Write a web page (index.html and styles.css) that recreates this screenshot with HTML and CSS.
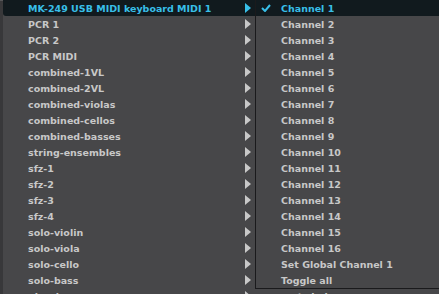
FILE: index.html
```html
<!DOCTYPE html>
<html lang="en">

<head>
    <meta charset="UTF-8">
    <title>MIDI input menu</title>
    <link rel="stylesheet" href="styles.css">
</head>

<body>
    <div class="desktop">
        <div class="behind"></div>

        <div class="menu">
            <ul class="menu-col">
                <li class="item active"><span>MK-249 USB MIDI keyboard MIDI 1</span><i class="arrow"></i></li>
                <li class="item"><span>PCR 1</span><i class="arrow"></i></li>
                <li class="item"><span>PCR 2</span><i class="arrow"></i></li>
                <li class="item"><span>PCR MIDI</span><i class="arrow"></i></li>
                <li class="item"><span>combined-1VL</span><i class="arrow"></i></li>
                <li class="item"><span>combined-2VL</span><i class="arrow"></i></li>
                <li class="item"><span>combined-violas</span><i class="arrow"></i></li>
                <li class="item"><span>combined-cellos</span><i class="arrow"></i></li>
                <li class="item"><span>combined-basses</span><i class="arrow"></i></li>
                <li class="item"><span>string-ensembles</span><i class="arrow"></i></li>
                <li class="item"><span>sfz-1</span><i class="arrow"></i></li>
                <li class="item"><span>sfz-2</span><i class="arrow"></i></li>
                <li class="item"><span>sfz-3</span><i class="arrow"></i></li>
                <li class="item"><span>sfz-4</span><i class="arrow"></i></li>
                <li class="item"><span>solo-violin</span><i class="arrow"></i></li>
                <li class="item"><span>solo-viola</span><i class="arrow"></i></li>
                <li class="item"><span>solo-cello</span><i class="arrow"></i></li>
                <li class="item"><span>solo-bass</span><i class="arrow"></i></li>
                <li class="item"><span>piccolo</span><i class="arrow"></i></li>
            </ul>
            <ul class="menu-col second">
                <li class="item"><span>sort shakers</span></li>
            </ul>
        </div>

        <div class="submenu">
            <ul>
                <li class="item active"><svg class="check" width="10" height="8" viewBox="0 0 10 8"><polyline points="1,4 4,7 9,1" fill="none" stroke="#38bfe8" stroke-width="2"/></svg><span>Channel 1</span></li>
                <li class="item"><span>Channel 2</span></li>
                <li class="item"><span>Channel 3</span></li>
                <li class="item"><span>Channel 4</span></li>
                <li class="item"><span>Channel 5</span></li>
                <li class="item"><span>Channel 6</span></li>
                <li class="item"><span>Channel 7</span></li>
                <li class="item"><span>Channel 8</span></li>
                <li class="item"><span>Channel 9</span></li>
                <li class="item"><span>Channel 10</span></li>
                <li class="item"><span>Channel 11</span></li>
                <li class="item"><span>Channel 12</span></li>
                <li class="item"><span>Channel 13</span></li>
                <li class="item"><span>Channel 14</span></li>
                <li class="item"><span>Channel 15</span></li>
                <li class="item"><span>Channel 16</span></li>
                <li class="item"><span>Set Global Channel 1</span></li>
                <li class="item"><span>Toggle all</span></li>
            </ul>
        </div>
    </div>
</body>

</html>
```

FILE: styles.css
```css
body {
    margin: 0;
    background-color: #474749;
    font-family: "DejaVu Sans", sans-serif;
    font-size: 9.5px;
    font-weight: bold;
    color: #c8c8c8;
    overflow: hidden;
}

.desktop {
    position: relative;
    display: flex;
    height: 294px;
    overflow: hidden;
}

.behind {
    width: 3px;
    flex-shrink: 0;
    background-color: #38383a;
    border-top: 1px solid #565658;
}

.menu {
    display: flex;
    background-color: #474749;
}

.menu-col {
    list-style: none;
    margin: 0;
    padding: 0;
    width: 252px;
}

.menu-col.second {
    width: 184px;
    padding-top: 288px;
}

ul {
    list-style: none;
    margin: 0;
    padding: 0;
}

.item {
    position: relative;
    display: flex;
    align-items: center;
    height: 16px;
    padding-left: 25px;
    white-space: nowrap;
}

.menu-col.second .item {
    padding-left: 26px;
}

.item.active {
    background-color: #111a1e;
    color: #38bfe8;
}

.menu-col .item.active {
    border-bottom-left-radius: 3px;
}

.arrow {
    position: absolute;
    left: 242px;
    top: 3px;
    width: 0;
    height: 0;
    border-top: 5px solid transparent;
    border-bottom: 5px solid transparent;
    border-left: 6px solid #c8c8c8;
}

.item.active .arrow {
    border-left-color: #38bfe8;
}

.submenu {
    position: absolute;
    left: 255px;
    top: 0;
    right: 0;
    background-color: #474749;
    border-left: 1px solid #1a1a1c;
    border-bottom: 1px solid #1a1a1c;
}

.submenu .item {
    padding-left: 25px;
}

.check {
    position: absolute;
    left: 5px;
    top: 4px;
}
```
